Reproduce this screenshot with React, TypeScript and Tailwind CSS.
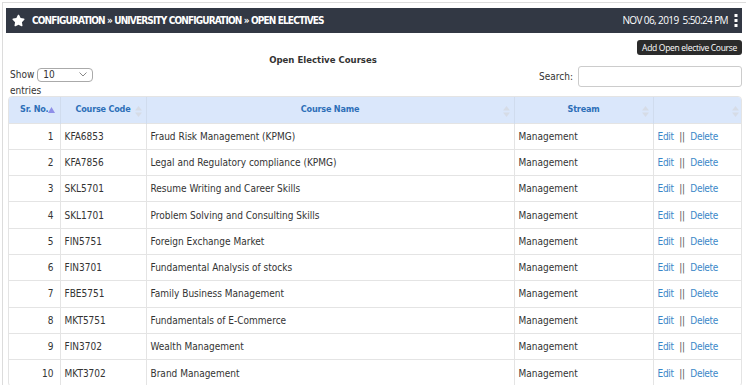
import { FaStar } from "react-icons/fa";

const courses = [
  { code: "KFA6853", name: "Fraud Risk Management (KPMG)" },
  { code: "KFA7856", name: "Legal and Regulatory compliance (KPMG)" },
  { code: "SKL5701", name: "Resume Writing and Career Skills" },
  { code: "SKL1701", name: "Problem Solving and Consulting Skills" },
  { code: "FIN5751", name: "Foreign Exchange Market" },
  { code: "FIN3701", name: "Fundamental Analysis of stocks" },
  { code: "FBE5751", name: "Family Business Management" },
  { code: "MKT5751", name: "Fundamentals of E-Commerce" },
  { code: "FIN3702", name: "Wealth Management" },
  { code: "MKT3702", name: "Brand Management" },
];

const SortIcon = ({ active }: { active?: boolean }) =>
  active ? (
    <svg width="7" height="6" viewBox="0 0 7 6" className="inline-block">
      <path d="M3.5 0 L7 6 L0 6 Z" fill="#8f8fe8" />
    </svg>
  ) : (
    <svg width="7" height="11" viewBox="0 0 7 11" className="inline-block">
      <path d="M3.5 0 L7 4.5 L0 4.5 Z" fill="#d6dce6" />
      <path d="M3.5 11 L7 6.5 L0 6.5 Z" fill="#d6dce6" />
    </svg>
  );

export default function App() {
  return (
    <div className="w-[750px] h-[385px] overflow-hidden bg-white font-['DejaVu_Sans_Condensed','DejaVu_Sans',sans-serif] text-[#333]">
      <div className="ml-[2px] mt-[2px] w-[744px] h-[400px] border-l border-t border-[#dcdcdc] pl-[3px] pt-[5px]">
        {/* HEADER BAR */}
        <div className="w-[736px] h-[25px] bg-[#323844] flex items-center pl-[6px] pr-[4px] text-white">
          <FaStar className="text-[13px]" />
          <span className="ml-[7px] text-[10px] font-bold tracking-[-0.85px]">
            CONFIGURATION » UNIVERSITY CONFIGURATION » OPEN ELECTIVES
          </span>
          <span className="ml-auto text-[10px] font-['Open_Sans',sans-serif] tracking-[-0.6px]">
            NOV 06, 2019 &nbsp;5:50:24 PM
          </span>
          <svg width="4" height="13" viewBox="0 0 4 13" className="ml-[6px]">
            <rect x="0.5" y="0" width="3" height="3" fill="#fff" />
            <rect x="0.5" y="5" width="3" height="3" fill="#fff" />
            <rect x="0.5" y="10" width="3" height="3" fill="#fff" />
          </svg>
        </div>

        {/* TOOLBAR */}
        <div className="w-[736px] pl-[2px] relative">
          <div className="flex justify-end pt-[7px]">
            <button className="h-[15px] px-[5px] bg-[#2b2b2b] rounded-[3px] text-white text-[8.5px] font-['Open_Sans',sans-serif] leading-[15px] tracking-[-0.3px]">
              Add Open elective Course
            </button>
          </div>
          <div className="absolute left-[2px] top-[20px] w-[630px] text-center text-[9.5px] font-bold">
            Open Elective Courses
          </div>
          <div className="flex justify-between items-start mt-[12px] h-[28px]">
            <div className="text-[10px] pl-[2px]">
              <div className="flex items-center gap-[3px]">
                <span>Show</span>
                <div className="w-[56px] h-[14px] border border-[#aaa] rounded-[4px] flex items-center justify-between px-[5px] text-[10px]">
                  <span>10</span>
                  <svg width="8" height="5" viewBox="0 0 8 5">
                    <path d="M0.5 0.5 L4 4 L7.5 0.5" stroke="#888" fill="none" />
                  </svg>
                </div>
              </div>
              <div className="mt-[1px]">entries</div>
            </div>
            <div className="flex items-center gap-[5px] text-[10px] -mt-[1px]">
              <span>Search:</span>
              <div className="w-[164px] h-[21px] border border-[#ccc] rounded-[3px]" />
            </div>
          </div>
        </div>

        {/* TABLE */}
        <div className="ml-[2px] w-[734px] border border-[#e4e4e4] rounded-[4px] overflow-hidden mt-[1px]">
          <table className="w-full border-collapse text-[10px] table-fixed">
            <colgroup>
              <col className="w-[51px]" />
              <col className="w-[86px]" />
              <col className="w-[368px]" />
              <col className="w-[139px]" />
              <col className="w-[90px]" />
            </colgroup>
            <thead>
              <tr className="h-[26px] bg-[#dae7fb] text-[#2d6fb8] font-bold text-[9px] tracking-[-0.2px]">
                <th className="border-r border-[#d0dcee] relative text-left pl-[11px]">
                  Sr. No.
                  <span className="absolute right-[5px] top-[6px]">
                    <SortIcon active />
                  </span>
                </th>
                <th className="border-r border-[#d0dcee] relative">
                  Course Code
                  <span className="absolute right-[4px] top-[8px]">
                    <SortIcon />
                  </span>
                </th>
                <th className="border-r border-[#d0dcee] relative">
                  Course Name
                  <span className="absolute right-[4px] top-[8px]">
                    <SortIcon />
                  </span>
                </th>
                <th className="border-r border-[#d0dcee] relative">
                  Stream
                  <span className="absolute right-[4px] top-[8px]">
                    <SortIcon />
                  </span>
                </th>
                <th className="relative">
                  <span className="absolute right-[4px] top-[8px]">
                    <SortIcon />
                  </span>
                </th>
              </tr>
            </thead>
            <tbody>
              {courses.map((c, i) => (
                <tr key={c.code} className="h-[26.3px] border-t border-[#e4e4e4]">
                  <td className="text-right pr-[6px] border-r border-[#e4e4e4]">{i + 1}</td>
                  <td className="pl-[4px] border-r border-[#e4e4e4]">{c.code}</td>
                  <td className="pl-[4px] border-r border-[#e4e4e4]">{c.name}</td>
                  <td className="pl-[4px] border-r border-[#e4e4e4]">Management</td>
                  <td className="pl-[4px] text-[#3a87c8] tracking-[-0.3px]">
                    Edit <span className="text-[#555] mx-[3px]">||</span> Delete
                  </td>
                </tr>
              ))}
            </tbody>
          </table>
        </div>
      </div>
    </div>
  );
}
